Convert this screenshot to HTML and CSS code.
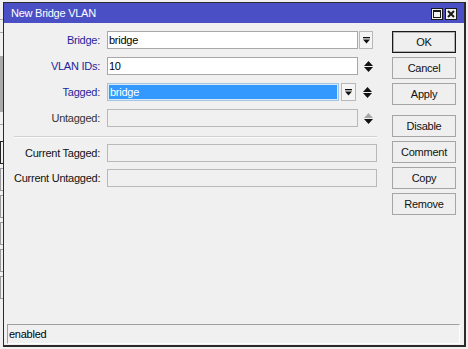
FILE: index.html
```html
<!DOCTYPE html>
<html>
<head>
	<title>New Bridge VLAN</title>
	<link rel="stylesheet" href="styles.css">
</head>
<body>
	<div class="desktop">
		<div class="behind">
			<div class="behind-line first"></div>
			<div class="behind-line"></div>
			<div class="behind-block"></div>
			<div class="behind-line"></div>
			<div class="behind-box dark"></div>
			<div class="behind-box"></div>
			<div class="behind-box"></div>
			<div class="behind-box"></div>
			<div class="behind-box"></div>
			<div class="behind-box"></div>
		</div>

		<div class="dialog">
			<div class="titlebar">
				<span class="title">New Bridge VLAN</span>
				<div class="title-buttons">
					<span class="tbtn">
						<svg width="12" height="12" viewBox="0 0 12 12">
							<rect x="0.5" y="0.5" width="11" height="11" fill="#f2f2f2" stroke="#1a1a1a"/>
							<rect x="2.5" y="2.5" width="7" height="7" fill="none" stroke="#1a1a1a"/>
							<rect x="2" y="2" width="8" height="2" fill="#1a1a1a"/>
						</svg>
					</span>
					<span class="tbtn">
						<svg width="12" height="12" viewBox="0 0 12 12">
							<rect x="0.5" y="0.5" width="11" height="11" fill="#f2f2f2" stroke="#1a1a1a"/>
							<path d="M3 3 L9 9 M9 3 L3 9" stroke="#1a1a1a" stroke-width="2"/>
						</svg>
					</span>
				</div>
			</div>

			<div class="content">
				<div class="form">
					<div class="row">
						<span class="lbl blue">Bridge:</span>
						<div class="field w-long">bridge</div>
						<span class="drop">
							<svg width="7" height="7" viewBox="0 0 7 7"><rect x="0" y="0" width="7" height="1.3" fill="#111"/><polygon points="0,2.5 7,2.5 3.5,6.5" fill="#111"/></svg>
						</span>
					</div>
					<div class="row">
						<span class="lbl blue">VLAN IDs:</span>
						<div class="field w-long">10</div>
						<span class="spin">
							<svg width="9" height="13" viewBox="0 0 9 13"><polygon points="0,6 4.5,1 9,6" fill="#111"/><polygon points="0,7 9,7 4.5,12" fill="#111"/></svg>
						</span>
					</div>
					<div class="row">
						<span class="lbl blue">Tagged:</span>
						<div class="field w-short selected"><span class="sel-text">bridge</span></div>
						<span class="drop drop-tagged">
							<svg width="7" height="7" viewBox="0 0 7 7"><rect x="0" y="0" width="7" height="1.3" fill="#111"/><polygon points="0,2.5 7,2.5 3.5,6.5" fill="#111"/></svg>
						</span>
						<span class="spin spin-tagged">
							<svg width="9" height="13" viewBox="0 0 9 13"><polygon points="0,6 4.5,1 9,6" fill="#111"/><polygon points="0,7 9,7 4.5,12" fill="#111"/></svg>
						</span>
					</div>
					<div class="row last">
						<span class="lbl grey">Untagged:</span>
						<div class="field w-long disabled"></div>
						<span class="spin">
							<svg width="9" height="13" viewBox="0 0 9 13"><polygon points="0,6 4.5,1 9,6" fill="#a8a8a8"/><polygon points="0,7 9,7 4.5,12" fill="#111"/></svg>
						</span>
					</div>

					<div class="sep"></div>

					<div class="row tight">
						<span class="lbl">Current Tagged:</span>
						<div class="field w-full disabled"></div>
					</div>
					<div class="row tight">
						<span class="lbl">Current Untagged:</span>
						<div class="field w-full disabled"></div>
					</div>
				</div>

				<div class="buttons">
					<button class="btn default">OK</button>
					<button class="btn">Cancel</button>
					<button class="btn">Apply</button>
					<button class="btn spaced">Disable</button>
					<button class="btn">Comment</button>
					<button class="btn">Copy</button>
					<button class="btn">Remove</button>
				</div>
			</div>

			<div class="statusbar">enabled</div>
		</div>
	</div>
</body>
</html>
```

FILE: styles.css
```css
body {
	margin: 0;
	width: 468px;
	height: 349px;
	overflow: hidden;
	background: #f0f0f0;
	font-family: "Liberation Sans", Arial, sans-serif;
	font-size: 11px;
	letter-spacing: -0.25px;
	color: #111;
}

.desktop {
	display: flex;
	height: 349px;
}

/* bits of the window behind the dialog */
.behind {
	width: 3px;
	display: flex;
	flex-direction: column;
}

.behind-line {
	height: 1px;
	margin-top: 12px;
	background: #a8a8a8;
}

.behind-line.first {
	margin-top: 19px;
}

.behind-block {
	height: 56px;
	margin-top: 23px;
	background: #a9a9a9;
}

.behind-line + .behind-box {
	margin-top: 16px;
}

.behind-box {
	height: 23px;
	margin-top: 4px;
	border: 1px solid #9a9a9a;
	border-right: none;
	box-sizing: border-box;
}

.behind-box.dark {
	border-color: #222;
}

.dialog {
	margin-top: 2px;
	width: 463px;
	height: 345px;
	box-sizing: border-box;
	border: 1px solid #2a2a2a;
	border-right-width: 2px;
	border-bottom-width: 2px;
	background: #f0f0f0;
	display: flex;
	flex-direction: column;
}

.titlebar {
	height: 20px;
	background: #4a4fc6;
	color: #fff;
	display: flex;
	align-items: center;
	justify-content: space-between;
	padding: 0 7px 0 7px;
}

.title {
	font-size: 11px;
}

.title-buttons {
	display: flex;
	gap: 2px;
	padding-top: 2px;
}

.tbtn svg {
	display: block;
}

.content {
	flex: 1;
	display: flex;
	padding: 8px 0 0 10px;
}

.form {
	width: 363px;
}

.row {
	display: flex;
	align-items: center;
	height: 18px;
	margin-bottom: 8px;
}

.row.last {
	margin-bottom: 9px;
}

.row.tight {
	margin-bottom: 7px;
}

.lbl {
	width: 86px;
	margin-right: 7px;
	text-align: right;
	white-space: nowrap;
}

.blue {
	color: #1f1f9c;
}

.grey {
	color: #333;
}

.field {
	height: 18px;
	box-sizing: border-box;
	border: 1px solid #a7a7a7;
	background: #fff;
	padding-left: 1px;
	line-height: 16px;
	color: #000;
}

.w-long {
	width: 251px;
}

.w-short {
	width: 232px;
}

.w-full {
	width: 270px;
}

.field.disabled {
	background: #f0f0f0;
	border-color: #b9b9b9;
}

.field.selected {
	background: #3399ff;
	border-color: #a6c4e2;
	box-shadow: inset 0 0 0 1px #d9e9f8;
	padding-left: 2px;
	color: #fff;
}

.drop {
	width: 14px;
	height: 18px;
	box-sizing: border-box;
	margin-left: 1px;
	border: 1px solid #b8b8b8;
	background: #f4f4f4;
	display: flex;
	align-items: center;
	justify-content: center;
}

.drop-tagged {
	width: 15px;
	margin-left: 2px;
}

.spin {
	width: 9px;
	margin-left: 6px;
	display: flex;
}

.spin-tagged {
	margin-left: 7px;
}

.sep {
	border-top: 1px solid #d2d2d2;
	border-bottom: 1px solid #fbfbfb;
	margin-bottom: 6px;
}

.buttons {
	margin-left: 15px;
	width: 64px;
	display: flex;
	flex-direction: column;
}

.btn {
	height: 22px;
	margin: 0 0 4px 0;
	padding: 0;
	border: 1px solid #a5a5a5;
	background: #efefef;
	font-family: "Liberation Sans", Arial, sans-serif;
	font-size: 11px;
	letter-spacing: -0.25px;
	color: #111;
	text-align: center;
}

.btn.default {
	border-color: #1a1a1a;
	box-shadow: inset 0 0 0 1px #b0b0b0;
}

.btn.spaced {
	margin-top: 6px;
}

.statusbar {
	height: 20px;
	box-sizing: border-box;
	margin: 0 4px 1px 3px;
	border-top: 1px solid #a0a0a0;
	border-left: 1px solid #a0a0a0;
	border-right: 1px solid #fdfdfd;
	border-bottom: 1px solid #fdfdfd;
	padding-left: 1px;
	line-height: 18px;
	color: #000;
}
```
